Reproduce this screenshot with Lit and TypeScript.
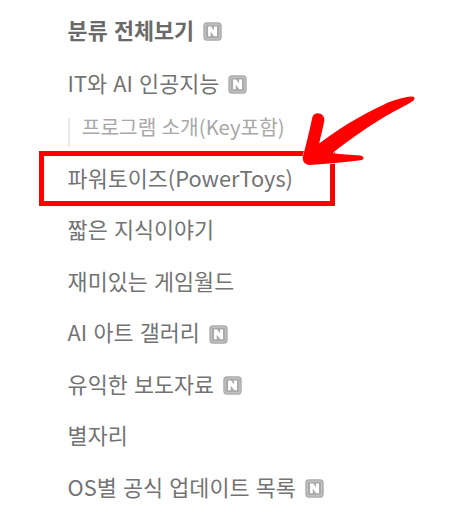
import { LitElement, html, css } from "lit";
import { customElement, property } from "lit/decorators.js";
import { classMap } from "lit/directives/class-map.js";

interface Category {
  label: string;
  kind?: "title" | "child";
  fresh?: boolean;
  marked?: boolean;
}

const categories: Category[] = [
  { label: "분류 전체보기", kind: "title", fresh: true },
  { label: "IT와 AI 인공지능", fresh: true },
  { label: "프로그램 소개(Key포함)", kind: "child" },
  { label: "파워토이즈(PowerToys)", marked: true },
  { label: "짧은 지식이야기" },
  { label: "재미있는 게임월드" },
  { label: "AI 아트 갤러리", fresh: true },
  { label: "유익한 보도자료", fresh: true },
  { label: "별자리" },
  { label: "OS별 공식 업데이트 목록", fresh: true },
];

@customElement("new-badge")
export class NewBadge extends LitElement {
  static styles = css`
    :host { display: block; width: 19px; height: 19px; }
    svg { display: block; }
  `;
  render() {
    return html`<svg width="19" height="19" viewBox="0 0 19 19">
      <rect x="0.3" y="0.3" width="18.4" height="18.4" rx="3.6" fill="#aaa" />
      <rect x="2.2" y="2.2" width="14.6" height="14.6" rx="2" fill="none" stroke="#bfbfbf" stroke-width="1.4" />
      <path d="M5.1 14.2V4.6H8L11.1 8.4V4.6H14V14.2H11.3L7.7 9.8V14.2Z" fill="#fff" />
    </svg>`;
  }
}

@customElement("category-row")
export class CategoryRow extends LitElement {
  @property({ attribute: false }) item!: Category;

  static styles = css`
    :host { display: block; }
    .row {
      display: flex;
      align-items: center;
      height: 51.5px;
      padding-left: 28.6px;
      box-sizing: border-box;
      font-size: 21.8px;
      line-height: 32px;
      word-spacing: 1.3px;
      color: #737373;
      white-space: nowrap;
    }
    .title { height: 51px; margin-bottom: 2px; font-weight: 700; color: #6a6a6a; }
    .child {
      height: 43.5px;
      font-size: 20.3px;
      word-spacing: 0.5px;
      color: #a8a8a8;
      align-items: flex-start;
    }
    .child .text {
      border-left: 2px solid #e8e8e8;
      padding: 0 0 12px 12.2px;
      margin-top: 9px;
      line-height: 17px;
    }
    .marked {
      height: 55px;
      margin: -1px 0 -2.5px;
      width: 296px;
      padding: 0 0 2px 23.6px;
      border: 5px solid #f00;
    }
    new-badge { margin: 4px 0 0 9px; }
    .title new-badge { margin: 3px 0 0 8.6px; }
  `;

  render() {
    const { label, kind, fresh, marked } = this.item;
    return html`<div class=${classMap({ row: true, title: kind === "title", child: kind === "child", marked: !!marked })}>
      <span class="text">${label}</span>${fresh ? html`<new-badge></new-badge>` : null}
    </div>`;
  }
}

@customElement("app-root")
export class AppRoot extends LitElement {
  static styles = css`
    :host {
      display: block;
      position: relative;
      width: 464px;
      height: 519px;
      overflow: hidden;
      background: #fff;
      font-family: "Noto Sans CJK KR", sans-serif;
    }
    .list { display: flex; flex-direction: column; padding: 4px 0 0 39px; }
    .list category-row { flex: none; }
    .arrow { position: absolute; left: 296px; top: 88px; }
  `;

  render() {
    return html`
      <nav class="list">${categories.map((item) => html`<category-row .item=${item}></category-row>`)}</nav>
      <svg class="arrow" width="124" height="84" viewBox="296 88 124 84">
        <path
          fill="#f00"
          stroke="#fff"
          stroke-width="1"
          paint-order="stroke"
          d="M411.5 96.6C414.4 96.2 415.4 98.8 413.6 100.4C408 104.5 400 108 393 111.9C373 123 352 137.5 332.5 153C341 154.4 351 154.8 360 155.5C364.5 156 364.6 159.8 360.5 160.3C343 162.7 327 163.9 310 165C305.5 165.3 302.2 161.5 302.8 157C306 145 309.5 131 312.3 117.5C314.3 110.2 325.2 113 324.3 120.5C323 128.5 320.5 136.5 319.2 143.5C338 129 360 115.5 384 104.4C393 100.5 403 97.2 411.5 96.6Z"
        />
      </svg>
    `;
  }
}
